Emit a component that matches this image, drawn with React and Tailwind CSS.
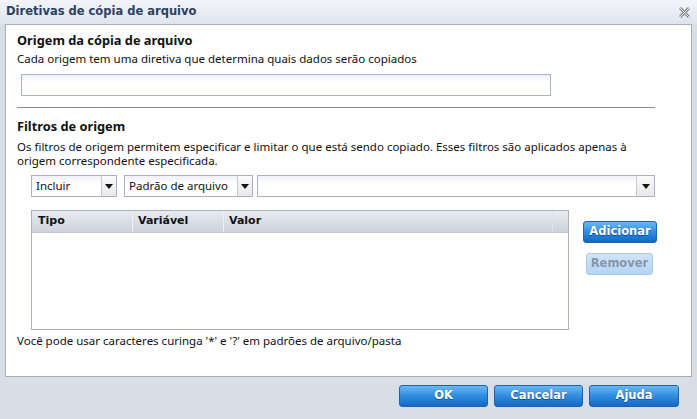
import React from "react";

const body = "font-['Noto_Sans',sans-serif]";
const dv = "font-['DejaVu_Sans',Verdana,sans-serif]";

function Arrow() {
  return (
    <svg width="8" height="5" viewBox="0 0 8 5">
      <path d="M0 0 L8 0 L4 5 Z" fill="#111" />
    </svg>
  );
}

function Select({ width, label, arrowW = 15 }) {
  return (
    <div className={`flex h-[22px] border border-[#a9b0c8] bg-white ${width}`}>
      <div className={`flex-1 flex items-center pl-[4px] text-[11.5px] text-[#111] ${body} bg-gradient-to-b from-[#f1f3fa] to-white to-[40%]`}>
        {label}
      </div>
      <div
        className="flex items-center justify-center border-l border-[#c6cad6] bg-gradient-to-b from-[#fafafa] to-[#e8e8ea]"
        style={{ width: arrowW }}
      >
        <Arrow />
      </div>
    </div>
  );
}

function BlueButton({ children, className = "" }) {
  return (
    <div
      className={`flex items-center justify-center rounded-[3px] border border-[#1f63ad] bg-gradient-to-b from-[#6ab8f1] via-[#2f8ce0] to-[#1468c9] text-white font-bold text-[11.5px] ${dv} [text-shadow:0_1px_1px_rgba(0,40,100,0.6)] ${className}`}
    >
      {children}
    </div>
  );
}

export default function App() {
  return (
    <div className="w-[697px] h-[419px] bg-[#d8dee7] flex flex-col overflow-hidden">
      {/* Title bar */}
      <div className="h-[24px] flex items-center justify-between pl-[6px] pr-[7px] bg-gradient-to-b from-[#f3f5f9] to-[#dfe4ed]">
        <span className={`text-[11.5px] font-bold text-[#2a4263] ${dv}`}>
          Diretivas de cópia de arquivo
        </span>
        <svg width="11" height="11" viewBox="0 0 11 11">
          <path d="M1 1 L10 10 M10 1 L1 10" stroke="#8a8a8a" strokeWidth="3" />
          <path d="M1 1 L10 10 M10 1 L1 10" stroke="#e9ecf1" strokeWidth="1" />
        </svg>
      </div>

      {/* White panel */}
      <div className="mx-[5px] h-[353px] border border-[#a9afb8] bg-white flex flex-col pl-[11px]">
        <div className={`mt-[6px] h-[18px] leading-[18px] text-[12.8px] font-bold text-[#111] ${body}`}>
          Origem da cópia de arquivo
        </div>
        <div className={`mt-[3px] h-[14px] leading-[14px] text-[11.5px] text-[#111] ${body}`}>
          Cada origem tem uma diretiva que determina quais dados serão copiados
        </div>
        <div className="mt-[8px] ml-[4px] w-[530px] h-[22px] border border-[#a9b0d0] bg-gradient-to-b from-[#eef0f9] to-white to-[35%]" />
        <div className="mt-[11px] w-[638px] h-px bg-[#8c8c8c]" />
        <div className={`mt-[9px] h-[18px] leading-[18px] text-[12.8px] font-bold text-[#111] ${body}`}>
          Filtros de origem
        </div>
        <div className={`mt-[5px] leading-[14px] text-[11.5px] text-[#111] ${body} w-[640px]`}>
          Os filtros de origem permitem especificar e limitar o que está sendo copiado. Esses filtros são aplicados apenas à origem correspondente especificada.
        </div>
        <div className="mt-[7px] ml-[14px] flex">
          <Select width="w-[86px]" label="Incluir" />
          <div className="w-[7px]" />
          <Select width="w-[129px]" label="Padrão de arquivo" />
          <div className="w-[4px]" />
          <Select width="w-[398px]" label="" arrowW={18} />
        </div>
        <div className="mt-[13px] ml-[14px] flex gap-[14px]">
          <div className="w-[538px] h-[120px] border border-[#a9afb8] flex flex-col">
            <div className={`h-[22px] flex bg-gradient-to-b from-[#e8ebf0] to-[#cdd3dc] border-b border-[#bfc5ce] text-[11px] font-bold text-[#111] ${dv}`}>
              <div className="w-[101px] flex items-center pl-[6px] border-r border-[#eef0f3]">Tipo</div>
              <div className="w-[91px] flex items-center pl-[5px] border-r border-[#eef0f3]">Variável</div>
              <div className="w-[329px] flex items-center pl-[5px] border-r border-[#dfe2e7]">Valor</div>
              <div className="flex-1" />
            </div>
          </div>
          <div className="flex flex-col items-start pt-[11px]">
            <BlueButton className="w-[74px] h-[22px]">Adicionar</BlueButton>
            <div
              className={`mt-[10px] ml-[3px] w-[67px] h-[22px] flex items-center justify-center rounded-[3px] border border-[#a8cbec] bg-gradient-to-b from-[#cfe5f8] to-[#b3d4f2] text-[#8797a8] font-bold text-[11.5px] ${dv}`}
            >
              Remover
            </div>
          </div>
        </div>
        <div className={`mt-[4px] h-[14px] leading-[14px] text-[11.5px] text-[#111] ${body}`}>
          Você pode usar caracteres curinga '*' e '?' em padrões de arquivo/pasta
        </div>
      </div>

      {/* Footer */}
      <div className="flex justify-end gap-[6px] pr-[18px] pt-[8px]">
        <BlueButton className="w-[89px] h-[22px]">OK</BlueButton>
        <BlueButton className="w-[89px] h-[22px]">Cancelar</BlueButton>
        <BlueButton className="w-[90px] h-[22px]">Ajuda</BlueButton>
      </div>
    </div>
  );
}
